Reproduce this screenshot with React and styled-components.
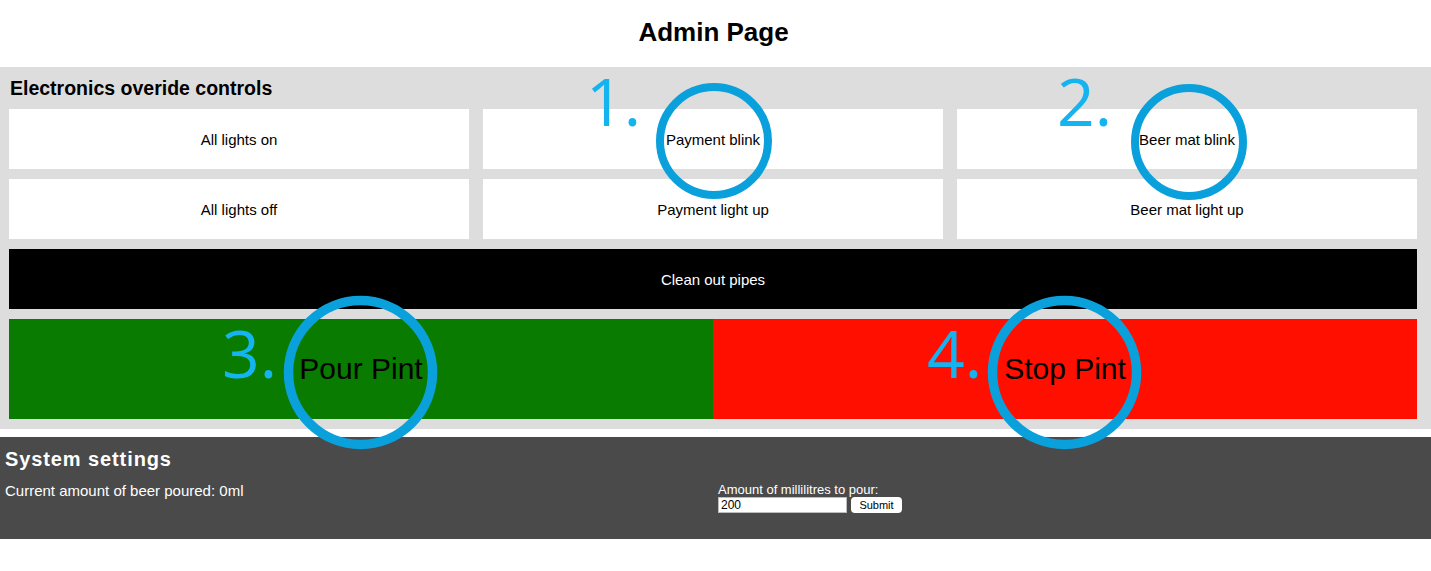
import React from "react";
import styled, { createGlobalStyle } from "styled-components";

const GlobalStyle = createGlobalStyle`
  body {
    margin: 0;
    background: #ffffff;
    font-family: "Liberation Sans", Arial, sans-serif;
  }
`;

const lightControls = [
  "All lights on",
  "Payment blink",
  "Beer mat blink",
  "All lights off",
  "Payment light up",
  "Beer mat light up",
];

const markers = [
  { label: "1.", x: 586, y: 67, cx: 714, cy: 141, r: 54, stroke: 8 },
  { label: "2.", x: 1057, y: 67, cx: 1189, cy: 142, r: 54, stroke: 8 },
  { label: "3.", x: 222, y: 319, cx: 360, cy: 372, r: 72, stroke: 9.5 },
  { label: "4.", x: 927, y: 319, cx: 1064, cy: 372, r: 72, stroke: 9.5 },
];

const App = () => {
  return (
    <Page>
      <GlobalStyle />
      <Title>Admin Page</Title>
      <Controls>
        <SectionHeading>Electronics overide controls</SectionHeading>
        <ControlGrid>
          {lightControls.map((name) => (
            <ControlButton key={name}>{name}</ControlButton>
          ))}
        </ControlGrid>
        <WideButton>Clean out pipes</WideButton>
        <PintRow>
          <PintButton $colour="#087b00">Pour Pint</PintButton>
          <PintButton $colour="#ff0f00">Stop Pint</PintButton>
        </PintRow>
      </Controls>
      <Settings>
        <SettingsHeading>System settings</SettingsHeading>
        <SettingsRow>
          <Info>Current amount of beer poured: 0ml</Info>
          <PourForm onSubmit={(e) => e.preventDefault()}>
            <FormLabel htmlFor="ml">Amount of millilitres to pour:</FormLabel>
            <FormLine>
              <AmountInput id="ml" defaultValue="200" />
              <SubmitButton type="submit">Submit</SubmitButton>
            </FormLine>
          </PourForm>
        </SettingsRow>
      </Settings>

      {markers.map((m) => (
        <React.Fragment key={m.label}>
          <MarkerNumber style={{ left: m.x, top: m.y }}>{m.label}</MarkerNumber>
          <MarkerRing
            width={(m.r + m.stroke) * 2}
            height={(m.r + m.stroke) * 2}
            style={{ left: m.cx - m.r - m.stroke, top: m.cy - m.r - m.stroke }}
          >
            <circle
              cx={m.r + m.stroke}
              cy={m.r + m.stroke}
              r={m.r}
              fill="none"
              stroke="#0aa0dc"
              strokeWidth={m.stroke}
            />
          </MarkerRing>
        </React.Fragment>
      ))}
    </Page>
  );
};

const Page = styled.div`
  position: relative;
  width: 100%;
  min-height: 571px;
  color: #000;
`;

const Title = styled.h1`
  margin: 0;
  height: 67px;
  display: flex;
  align-items: center;
  justify-content: center;
  font-size: 26px;
  font-weight: bold;
  padding: 0 4px 3px 0;
  box-sizing: border-box;
`;

const Controls = styled.section`
  background: #dddddd;
  padding: 0 14px 10px 9px;
`;

const SectionHeading = styled.h2`
  margin: 0;
  height: 42px;
  display: flex;
  align-items: center;
  padding: 0 0 0 1px;
  font-size: 19.5px;
  font-weight: bold;
`;

const ControlGrid = styled.div`
  display: grid;
  grid-template-columns: repeat(3, 1fr);
  column-gap: 14px;
  row-gap: 10px;
`;

const ControlButton = styled.button`
  height: 60px;
  border: none;
  background: #ffffff;
  color: #000;
  font-family: "Liberation Sans", Arial, sans-serif;
  font-size: 15px;
  cursor: pointer;
`;

const WideButton = styled(ControlButton)`
  display: block;
  width: 100%;
  margin-top: 10px;
  background: #000;
  color: #fff;
`;

const PintRow = styled.div`
  display: flex;
  margin-top: 10px;
`;

const PintButton = styled.button`
  flex: 1;
  height: 100px;
  border: none;
  background: ${(p) => p.$colour};
  color: #000;
  font-family: "Liberation Sans", Arial, sans-serif;
  font-size: 30px;
  cursor: pointer;
`;

const Settings = styled.section`
  margin-top: 8px;
  height: 102px;
  background: #4a4a4a;
  color: #fff;
  padding: 9px 5px 0;
  box-sizing: border-box;
`;

const SettingsHeading = styled.h3`
  margin: 0;
  font-size: 20px;
  line-height: 26px;
  letter-spacing: 0.9px;
  font-weight: bold;
`;

const SettingsRow = styled.div`
  display: grid;
  grid-template-columns: 713px 1fr;
  margin-top: 10px;
`;

const Info = styled.p`
  margin: 0;
  font-size: 15px;
  line-height: 17px;
`;

const PourForm = styled.form`
  display: flex;
  flex-direction: column;
  margin: 0;
`;

const FormLabel = styled.label`
  font-size: 13px;
  line-height: 15px;
`;

const FormLine = styled.div`
  display: flex;
  align-items: center;
  gap: 4px;
`;

const AmountInput = styled.input`
  width: 129px;
  height: 16px;
  box-sizing: border-box;
  border: 1px solid #bdbdbd;
  padding: 0 2px;
  font-family: "Liberation Sans", Arial, sans-serif;
  font-size: 12px;
  color: #000;
  background: #fff;
`;

const SubmitButton = styled.button`
  width: 51px;
  height: 16px;
  border: none;
  border-radius: 4px;
  background: #fff;
  color: #000;
  padding: 0;
  font-family: "Liberation Sans", Arial, sans-serif;
  font-size: 11px;
`;

const MarkerNumber = styled.span`
  position: absolute;
  font-family: "Open Sans", sans-serif;
  font-weight: 400;
  font-size: 66px;
  line-height: 1;
  color: #14b4f0;
  pointer-events: none;
`;

const MarkerRing = styled.svg`
  position: absolute;
  pointer-events: none;
`;

export default App;
